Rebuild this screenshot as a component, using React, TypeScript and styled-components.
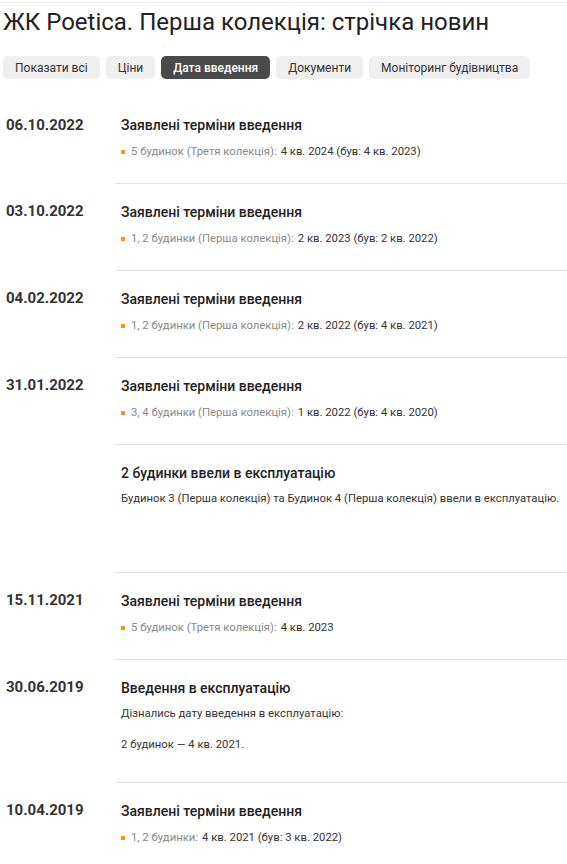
import React from 'react';
import styled, { createGlobalStyle } from 'styled-components';

const GlobalStyle = createGlobalStyle`
  body {
    margin: 0;
    background: #ffffff;
    font-family: Roboto, "Noto Sans", Arial, sans-serif;
    color: #222;
  }
`;

const Page = styled.div`
  width: 567px;
  padding-top: 2px;
`;

const Header = styled.header`
  border-top: 1px solid #e8e8e8;
  padding: 4px 3px 0;
`;

const Title = styled.h1`
  margin: 0;
  font-size: 24px;
  line-height: 30px;
  font-weight: 400;
  color: #222;
`;

const Tabs = styled.div`
  display: flex;
  gap: 6px;
  margin-top: 19px;
`;

const Tab = styled.button<{ $active?: boolean }>`
  border: none;
  border-radius: 5px;
  height: 23px;
  padding: 0 12px;
  font-family: inherit;
  font-size: 12px;
  font-weight: ${p => (p.$active ? 500 : 400)};
  background: ${p => (p.$active ? '#4a4a4a' : '#efefef')};
  color: ${p => (p.$active ? '#fff' : '#333')};
`;

const List = styled.div`
  margin-top: 18px;
  padding-left: 6px;
`;

const Row = styled.div`
  display: grid;
  grid-template-columns: 109px 1fr;
`;

const DateCell = styled.div`
  padding-top: 19px;
  font-size: 15px;
  line-height: 18px;
  font-weight: 700;
  color: #333;
`;

const Content = styled.div<{ $first?: boolean; $bottom?: number }>`
  border-top: ${p => (p.$first ? 'none' : '1px solid #e0e0e0')};
  padding: 19px 6px ${p => p.$bottom ?? 22}px;
`;

const EventTitle = styled.div`
  font-size: 14px;
  line-height: 18px;
  font-weight: 500;
  color: #222;
`;

const Bullet = styled.div`
  display: flex;
  align-items: center;
  margin-top: 9px;
  font-size: 11.3px;
  line-height: 18px;
  color: #333;
  &::before {
    content: '';
    width: 4px;
    height: 4px;
    background: #f7941d;
    margin-right: 6px;
  }
`;

const Label = styled.span`
  color: #888;
  margin-right: 4px;
`;

const Text = styled.p`
  margin: 8px 0 0;
  font-size: 11.3px;
  line-height: 18px;
  color: #333;
  & + & {
    margin-top: 13px;
  }
`;

type Item = {
  date?: string;
  title: string;
  label?: string;
  value?: string;
  texts?: string[];
  bottom?: number;
};

const items: Item[] = [
  { date: '06.10.2022', title: 'Заявлені терміни введення', label: '5 будинок (Третя колекція):', value: '4 кв. 2024 (був: 4 кв. 2023)' },
  { date: '03.10.2022', title: 'Заявлені терміни введення', label: '1, 2 будинки (Перша колекція):', value: '2 кв. 2023 (був: 2 кв. 2022)' },
  { date: '04.02.2022', title: 'Заявлені терміни введення', label: '1, 2 будинки (Перша колекція):', value: '2 кв. 2022 (був: 4 кв. 2021)' },
  { date: '31.01.2022', title: 'Заявлені терміни введення', label: '3, 4 будинки (Перша колекція):', value: '1 кв. 2022 (був: 4 кв. 2020)' },
  { title: '2 будинки ввели в експлуатацію', texts: ['Будинок 3 (Перша колекція) та Будинок 4 (Перша колекція) ввели в експлуатацію.'], bottom: 64 },
  { date: '15.11.2021', title: 'Заявлені терміни введення', label: '5 будинок (Третя колекція):', value: '4 кв. 2023' },
  { date: '30.06.2019', title: 'Введення в експлуатацію', texts: ['Дізнались дату введення в експлуатацію:', '2 будинок — 4 кв. 2021.'], bottom: 28 },
  { date: '10.04.2019', title: 'Заявлені терміни введення', label: '1, 2 будинки:', value: '4 кв. 2021 (був: 3 кв. 2022)' },
];

const tabs = ['Показати всі', 'Ціни', 'Дата введення', 'Документи', 'Моніторинг будівництва'];

export default function App() {
  return (
    <Page>
      <GlobalStyle />
      <Header>
        <Title>ЖК Poetica. Перша колекція: стрічка новин</Title>
        <Tabs>
          {tabs.map(t => (
            <Tab key={t} $active={t === 'Дата введення'}>{t}</Tab>
          ))}
        </Tabs>
      </Header>
      <List>
        {items.map((it, i) => (
          <Row key={i}>
            <DateCell>{it.date}</DateCell>
            <Content $first={i === 0} $bottom={it.bottom}>
              <EventTitle>{it.title}</EventTitle>
              {it.label && (
                <Bullet>
                  <Label>{it.label}</Label>
                  {it.value}
                </Bullet>
              )}
              {it.texts?.map(t => <Text key={t}>{t}</Text>)}
            </Content>
          </Row>
        ))}
      </List>
    </Page>
  );
}
